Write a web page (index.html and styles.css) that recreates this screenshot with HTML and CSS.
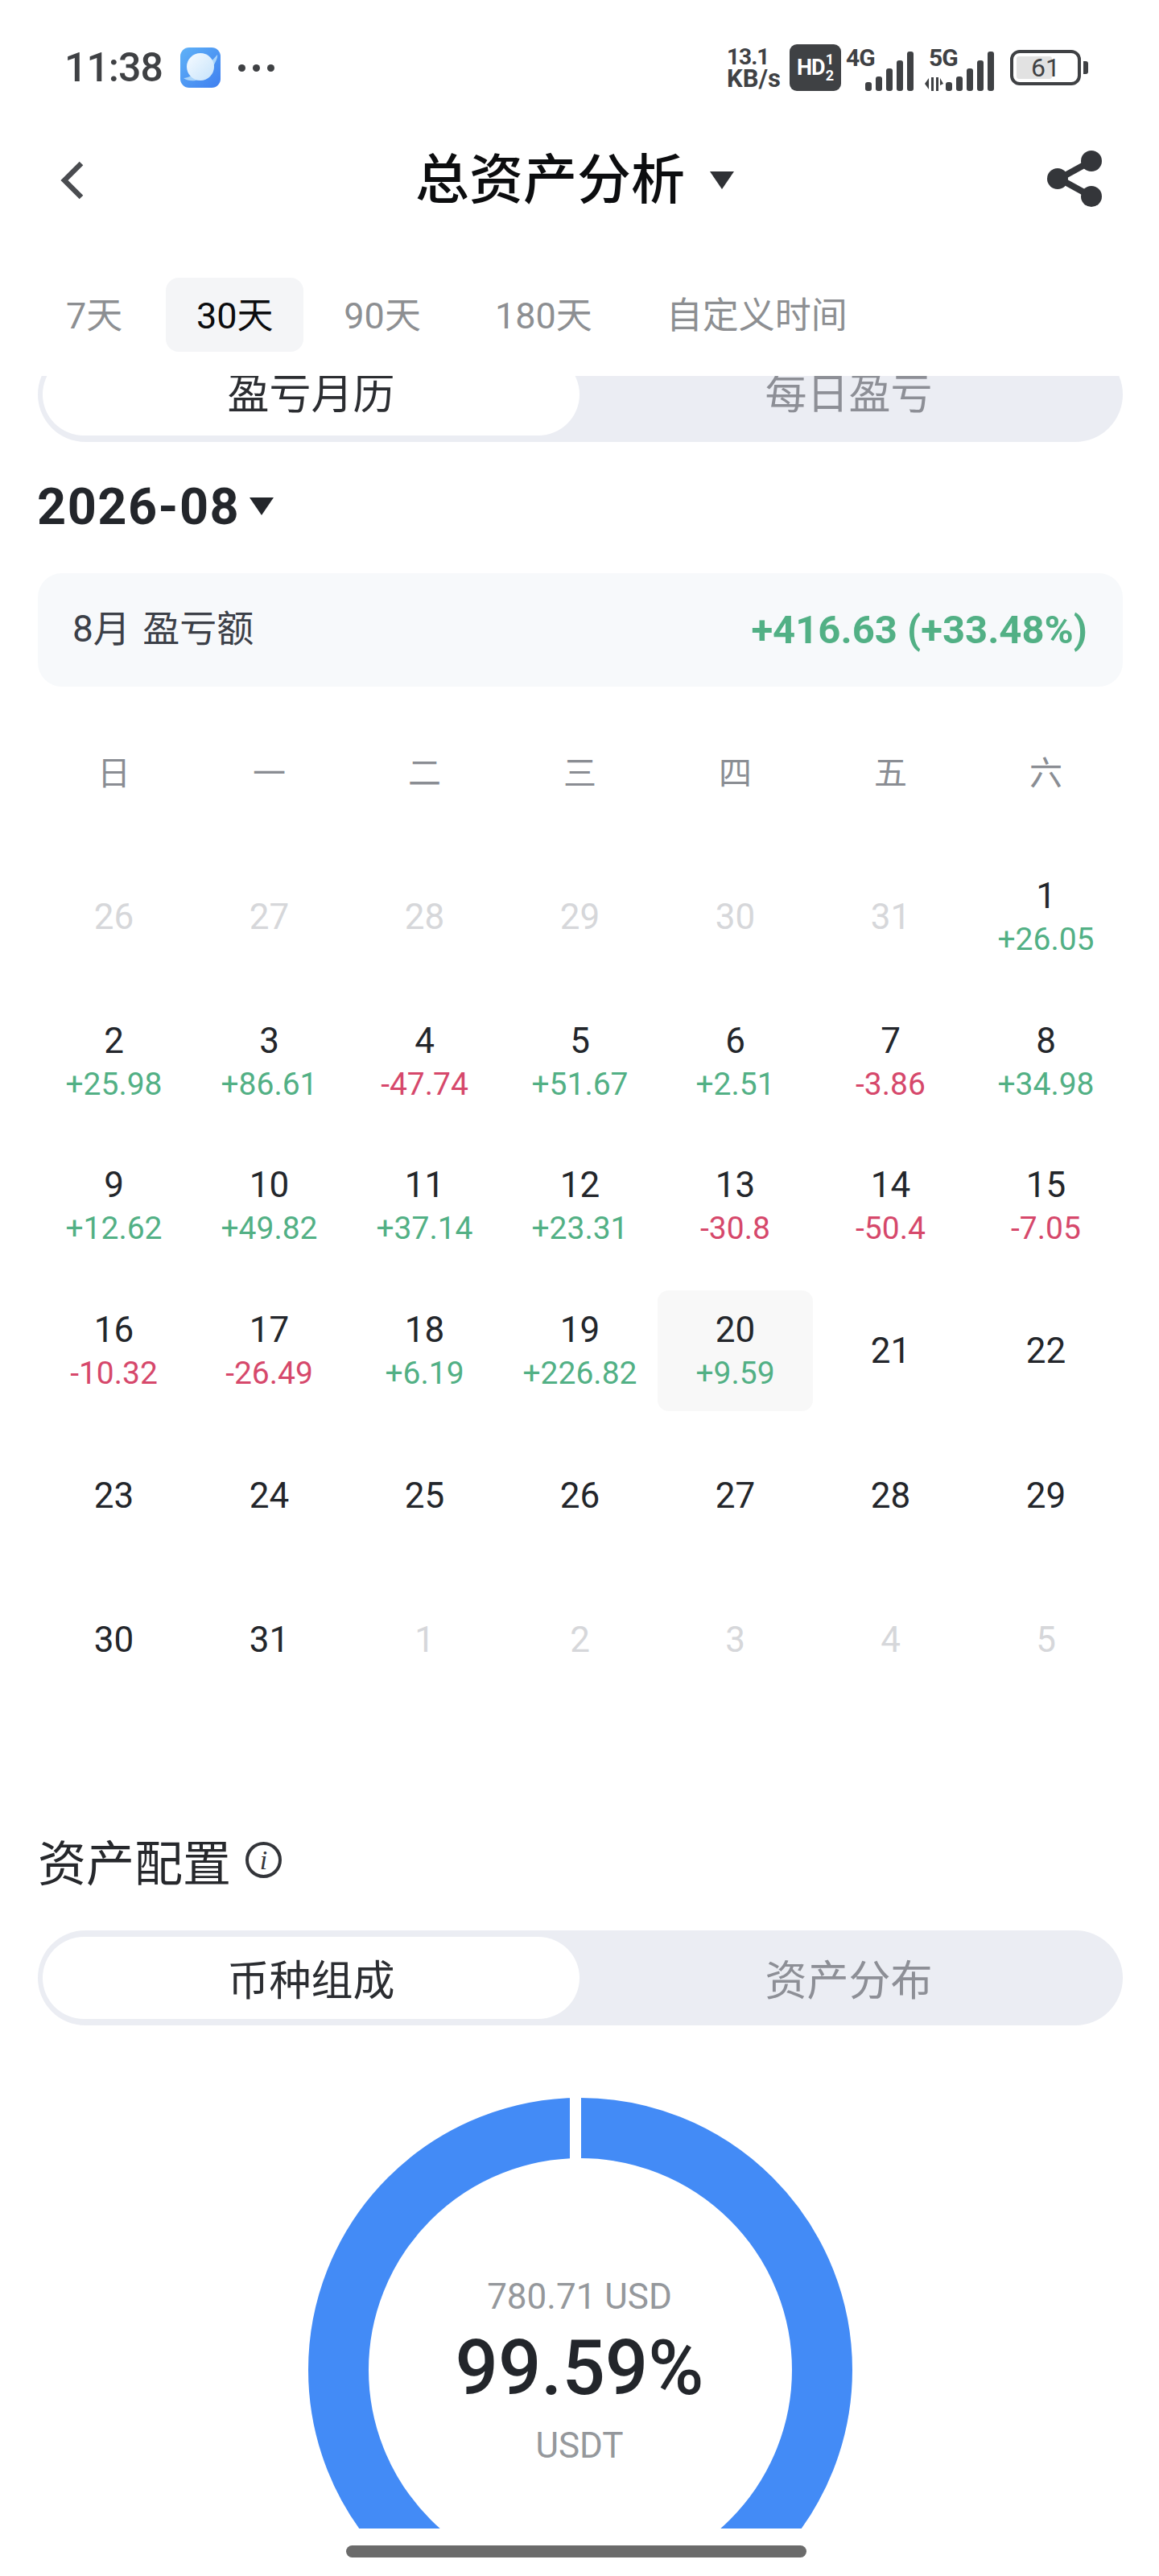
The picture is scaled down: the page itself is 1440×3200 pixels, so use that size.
FILE: index.html
```html
<!DOCTYPE html>
<html lang="zh-CN">
<head>
    <meta charset="UTF-8">
    <meta name="viewport" content="width=device-width, initial-scale=1.0">
    <title>总资产分析</title>
    <link rel="stylesheet" href="styles.css">
</head>
<body>
    <div class="page">
        <div class="statusbar">
            <div class="status-left">
                <span class="clock">11:38</span>
                <svg class="app-icon" viewBox="0 0 50 50">
                    <defs>
                        <linearGradient id="appBlue" x1="0" y1="0" x2="1" y2="1">
                            <stop offset="0" stop-color="#5fb2f7"/>
                            <stop offset="1" stop-color="#3f7ff0"/>
                        </linearGradient>
                        <linearGradient id="planet" x1="0" y1="0" x2="1" y2="1">
                            <stop offset="0" stop-color="#f6fbff"/>
                            <stop offset="1" stop-color="#c6e3fb"/>
                        </linearGradient>
                    </defs>
                    <rect width="50" height="50" rx="11" fill="url(#appBlue)"/>
                    <path d="M4 38 C12 38 32 26 46 9 C47 14 41 24 34 33 C28 41 12 44 4 38Z" fill="#a9d4fa"/>
                    <circle cx="25" cy="24" r="17" fill="url(#planet)"/>
                </svg>
                <span class="dots"><i></i><i></i><i></i></span>
            </div>
            <div class="status-right">
                <div class="speed"><span>13.1</span><span class="speed-unit">KB/s</span></div>
                <div class="hd"><b>HD</b><span class="hd-sims"><span>1</span><span>2</span></span></div>
                <svg class="net net-4g" viewBox="0 0 84 60">
                    <text x="0" y="28" class="net-label">4G</text>
                    <rect x="24" y="48" width="8" height="11" rx="3"/>
                    <rect x="37" y="41" width="8" height="18" rx="3"/>
                    <rect x="50" y="31" width="8" height="28" rx="3"/>
                    <rect x="63" y="21" width="8" height="38" rx="3"/>
                    <rect x="76" y="10" width="8" height="49" rx="3"/>
                </svg>
                <svg class="net net-5g" viewBox="0 0 88 60">
                    <text x="5" y="28" class="net-label">5G</text>
                    <path d="M0 50 L5 43 V57Z M8 42 H11 V59 H8Z M14 42 H17 V59 H14Z M19 43 L23 50 L19 52Z"/>
                    <rect x="26" y="48" width="8" height="11" rx="3"/>
                    <rect x="39" y="41" width="8" height="18" rx="3"/>
                    <rect x="52" y="31" width="8" height="28" rx="3"/>
                    <rect x="65" y="21" width="8" height="38" rx="3"/>
                    <rect x="78" y="10" width="8" height="49" rx="3"/>
                </svg>
                <div class="battery">
                    <div class="battery-body">
                        <div class="battery-fill"></div>
                        <span class="battery-num">61</span>
                    </div>
                    <div class="battery-tip"></div>
                </div>
            </div>
        </div>

        <div class="navbar">
            <svg class="back" viewBox="0 0 32 50"><path d="M27 4 L6 25 L27 46" fill="none" stroke="#4a4c50" stroke-width="6.5"/></svg>
            <div class="nav-title"><h1>总资产分析</h1><span class="caret caret-title"></span></div>
            <svg class="share" viewBox="0 0 72 72">
                <path d="M56 14 L16 36 L56 58" fill="none" stroke="#34363a" stroke-width="8"/>
                <circle cx="56" cy="14" r="13" fill="#34363a"/>
                <circle cx="14" cy="36" r="13" fill="#34363a"/>
                <circle cx="56" cy="58" r="13" fill="#34363a"/>
            </svg>
        </div>

        <div class="tabs">
            <span class="tab tab-7">7天</span>
            <span class="tab tab-30 active">30天</span>
            <span class="tab tab-90">90天</span>
            <span class="tab tab-180">180天</span>
            <span class="tab tab-custom">自定义时间</span>
        </div>

        <div class="segment-clip">
            <div class="segment">
                <div class="segment-item on">盈亏月历</div>
                <div class="segment-item">每日盈亏</div>
            </div>
        </div>

        <div class="month"><span>2026-08</span><span class="caret caret-month"></span></div>

        <div class="summary">
            <span class="summary-label">8月 盈亏额</span>
            <span class="summary-value">+416.63 (+33.48%)</span>
        </div>

        <div class="weekdays">
            <span>日</span><span>一</span><span>二</span><span>三</span><span>四</span><span>五</span><span>六</span>
        </div>

        <div class="calendar">
            <div class="day muted">26</div>
            <div class="day muted">27</div>
            <div class="day muted">28</div>
            <div class="day muted">29</div>
            <div class="day muted">30</div>
            <div class="day muted">31</div>
            <div class="day">1<span class="up">+26.05</span></div>

            <div class="day">2<span class="up">+25.98</span></div>
            <div class="day">3<span class="up">+86.61</span></div>
            <div class="day">4<span class="down">-47.74</span></div>
            <div class="day">5<span class="up">+51.67</span></div>
            <div class="day">6<span class="up">+2.51</span></div>
            <div class="day">7<span class="down">-3.86</span></div>
            <div class="day">8<span class="up">+34.98</span></div>

            <div class="day">9<span class="up">+12.62</span></div>
            <div class="day">10<span class="up">+49.82</span></div>
            <div class="day">11<span class="up">+37.14</span></div>
            <div class="day">12<span class="up">+23.31</span></div>
            <div class="day">13<span class="down">-30.8</span></div>
            <div class="day">14<span class="down">-50.4</span></div>
            <div class="day">15<span class="down">-7.05</span></div>

            <div class="day">16<span class="down">-10.32</span></div>
            <div class="day">17<span class="down">-26.49</span></div>
            <div class="day">18<span class="up">+6.19</span></div>
            <div class="day">19<span class="up">+226.82</span></div>
            <div class="day today">20<span class="up">+9.59</span></div>
            <div class="day">21</div>
            <div class="day">22</div>

            <div class="day">23</div>
            <div class="day">24</div>
            <div class="day">25</div>
            <div class="day">26</div>
            <div class="day">27</div>
            <div class="day">28</div>
            <div class="day">29</div>

            <div class="day">30</div>
            <div class="day">31</div>
            <div class="day muted">1</div>
            <div class="day muted">2</div>
            <div class="day muted">3</div>
            <div class="day muted">4</div>
            <div class="day muted">5</div>
        </div>

        <div class="section-title">
            <h2>资产配置</h2>
            <span class="info">i</span>
        </div>

        <div class="segment segment-assets">
            <div class="segment-item on">币种组成</div>
            <div class="segment-item">资产分布</div>
        </div>

        <div class="chart">
            <svg class="donut" viewBox="0 0 680 680">
                <circle cx="340" cy="340" r="300.5" fill="none" stroke="#438bf6" stroke-width="75"/>
                <rect x="327" y="0" width="14" height="80" fill="#fff"/>
            </svg>
            <div class="chart-text">
                <div class="chart-usd">780.71 USD</div>
                <div class="chart-pct">99.59%</div>
                <div class="chart-coin">USDT</div>
            </div>
        </div>

        <div class="home-bar"></div>
    </div>
</body>
</html>
```

FILE: styles.css
```css
* {
    box-sizing: border-box;
}
body {
    margin: 0;
    background: #fff;
    font-family: Roboto, "Noto Sans CJK SC", sans-serif;
    color: #23262b;
}
h1, h2 {
    margin: 0;
    font-weight: 500;
}
.page {
    width: 1440px;
    height: 3200px;
    overflow: hidden;
    background: #fff;
}

/* status bar */
.statusbar {
    height: 168px;
    padding: 0 88px 0 80px;
    display: flex;
    justify-content: space-between;
    align-items: center;
}
.status-left {
    display: flex;
    align-items: center;
}
.clock {
    font-size: 50px;
    font-weight: 500;
    color: #3f4144;
    letter-spacing: -1px;
    width: 144px;
}
.app-icon {
    width: 50px;
    height: 50px;
}
.dots {
    display: flex;
    gap: 9px;
    margin-left: 22px;
}
.dots i {
    width: 9px;
    height: 9px;
    border-radius: 50%;
    background: #3f4144;
}
.status-right {
    display: flex;
    align-items: center;
    color: #3f4144;
}
.speed {
    display: flex;
    flex-direction: column;
    font-size: 28px;
    line-height: 27px;
    font-weight: 700;
    letter-spacing: -1px;
    width: 74px;
}
.speed-unit {
    font-size: 31px;
    letter-spacing: 0;
}
.hd {
    width: 64px;
    height: 58px;
    margin-left: 4px;
    background: #3f4144;
    border-radius: 9px;
    color: #fff;
    display: flex;
    align-items: center;
    justify-content: center;
    gap: 1px;
}
.hd b {
    font-size: 27px;
    letter-spacing: -1px;
}
.hd-sims {
    display: flex;
    flex-direction: column;
    font-size: 18px;
    line-height: 20px;
    font-weight: 700;
}
.net {
    height: 60px;
    fill: #3f4144;
}
.net-4g {
    width: 84px;
    margin-left: 6px;
}
.net-5g {
    width: 88px;
    margin-left: 14px;
}
.net-label {
    font-size: 30px;
    font-weight: 700;
    letter-spacing: -1px;
}
.battery {
    display: flex;
    align-items: center;
    gap: 3px;
    margin-left: 18px;
}
.battery-body {
    position: relative;
    width: 88px;
    height: 44px;
    border: 4px solid #3f4144;
    border-radius: 12px;
    padding: 4px;
}
.battery-fill {
    width: 61%;
    height: 100%;
    background: #e2e2e2;
    border-radius: 3px;
}
.battery-num {
    position: absolute;
    inset: 0;
    display: flex;
    align-items: center;
    justify-content: center;
    font-size: 32px;
    color: #3f4144;
}
.battery-tip {
    width: 6px;
    height: 16px;
    background: #3f4144;
    border-radius: 0 3px 3px 0;
}

/* nav */
.navbar {
    position: relative;
    height: 112px;
    display: flex;
    align-items: center;
    justify-content: center;
}
.back {
    position: absolute;
    left: 74px;
    top: 31px;
    width: 32px;
    height: 50px;
}
.nav-title {
    display: flex;
    align-items: center;
    gap: 31px;
    margin-left: -12px;
}
.nav-title h1 {
    font-size: 67px;
    line-height: 80px;
    color: #0c0d0f;
}
.caret {
    display: block;
    width: 0;
    height: 0;
    border-left: 15px solid transparent;
    border-right: 15px solid transparent;
    border-top: 22px solid #2f3135;
}
.share {
    position: absolute;
    left: 1300px;
    top: 18px;
    width: 72px;
    height: 72px;
}

/* range tabs */
.tabs {
    display: flex;
    height: 187px;
    padding: 65px 0 30px 82px;
    font-size: 45px;
    line-height: 96px;
    color: #8d8f92;
}
.tab-7 {
    margin-right: 54px;
}
.tab-30 {
    width: 171px;
    height: 92px;
    text-align: center;
    border-radius: 16px;
    background: #f4f5f7;
    color: #0c0d0f;
    margin-right: 50px;
}
.tab-90 {
    margin-right: 92px;
}
.tab-180 {
    margin-right: 92px;
}

/* segmented control */
.segment-clip {
    height: 82px;
    overflow: hidden;
}
.segment-clip .segment {
    margin-top: -36px;
}
.segment-clip .segment-item {
    padding-bottom: 10px;
}
.segment {
    width: 1348px;
    height: 118px;
    margin-left: 47px;
    padding: 8px 0 8px 6px;
    background: #ebedf3;
    border-radius: 59px;
    display: flex;
    font-size: 52px;
    color: #8d8f96;
}
.segment-item {
    width: 667px;
    display: flex;
    align-items: center;
    justify-content: center;
    border-radius: 51px;
}
.segment-item.on {
    background: #fff;
    color: #2b2d31;
}
.segment-item + .segment-item {
    flex: 1;
    padding-right: 6px;
}

/* month */
.month {
    display: flex;
    align-items: center;
    gap: 12px;
    height: 80px;
    margin: 40px 0 0 46px;
    font-size: 63px;
    font-weight: 700;
    letter-spacing: 1.5px;
}
.caret-month {
    border-top-color: #23262b;
}

.summary {
    width: 1348px;
    height: 141px;
    margin: 43px 0 0 47px;
    padding: 0 44px 0 43px;
    background: #f7f9fb;
    border-radius: 30px;
    display: flex;
    align-items: center;
    justify-content: space-between;
}
.summary-label {
    font-size: 46px;
    line-height: 60px;
    margin-bottom: 4px;
    word-spacing: 4px;
    color: #3c4048;
}
.summary-value {
    font-size: 49px;
    font-weight: 700;
    color: #52b085;
}

/* calendar */
.weekdays,
.calendar {
    display: grid;
    grid-template-columns: repeat(7, 193px);
    margin-left: 45px;
    text-align: center;
}
.weekdays {
    margin-top: 78px;
    height: 60px;
    line-height: 60px;
    font-size: 41px;
    color: #8a8d93;
}
.calendar {
    margin-top: 73px;
    row-gap: 29.7px;
    grid-auto-rows: 150px;
}
.day {
    display: flex;
    flex-direction: column;
    align-items: center;
    justify-content: center;
    border-radius: 14px;
    font-size: 44px;
    line-height: 56px;
    color: #23262b;
}
.day span {
    font-size: 39px;
    line-height: 52px;
}
.muted {
    color: #d6d7da;
}
.up {
    color: #52b085;
}
.down {
    color: #d6486b;
}
.today {
    background: #f8f8f8;
}

/* asset section */
.section-title {
    display: flex;
    align-items: center;
    gap: 18px;
    height: 80px;
    margin: 158.5px 0 0 47px;
}
.section-title h2 {
    font-size: 60px;
    font-weight: 400;
    color: #26282c;
}
.info {
    width: 45px;
    height: 45px;
    border: 4px solid #33353a;
    border-radius: 50%;
    display: flex;
    align-items: center;
    justify-content: center;
    font-family: "Liberation Serif", serif;
    font-style: italic;
    font-size: 34px;
    color: #33353a;
}
.segment-assets {
    margin-top: 47px;
}

.chart {
    position: relative;
    height: 625px;
    padding-top: 88px;
    overflow: hidden;
}
.donut {
    display: block;
    width: 680px;
    height: 680px;
    margin-left: 381px;
}
.chart-text {
    position: absolute;
    left: 0;
    right: 0;
    top: 309px;
    text-align: center;
}
.chart-usd,
.chart-coin {
    font-size: 44px;
    line-height: 56px;
    color: #95989c;
}
.chart-pct {
    font-size: 94px;
    font-weight: 500;
    line-height: 120px;
    margin: 1px 0 8px;
    color: #23262b;
}

.home-bar {
    width: 572px;
    height: 15px;
    margin: 21px 0 0 430px;
    background: #6b6b6b;
    border-radius: 8px;
}
```
